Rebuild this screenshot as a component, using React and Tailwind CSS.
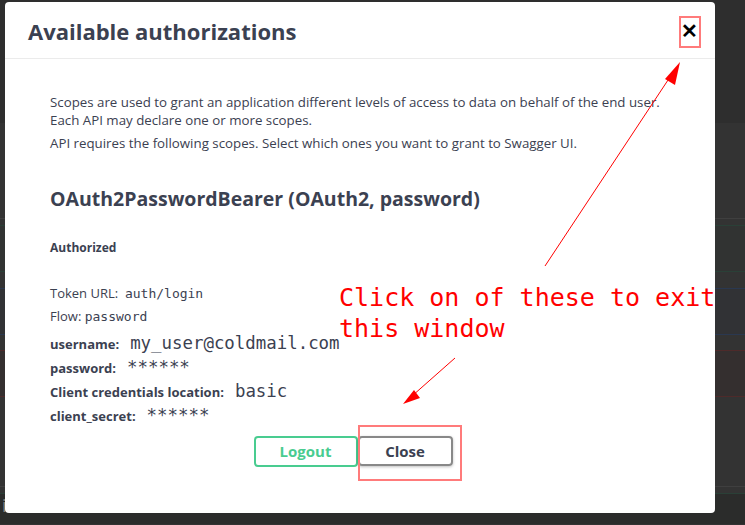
import React from "react";

const sans = { fontFamily: '"Open Sans", "Noto Sans", sans-serif' };

const Field = ({ label, value }) => (
  <div className="flex items-baseline h-[24px]">
    <span className="text-[13px] font-bold text-[#3b4151] mr-[11px]">{label}</span>
    <span className="font-['DejaVu_Sans_Mono',monospace] text-[17.4px] text-[#3b4151]">{value}</span>
  </div>
);

export default function App() {
  return (
    <div className="relative w-[745px] h-[525px] overflow-hidden bg-[#333333]" style={sans}>
      {/* page behind the overlay */}
      <div className="flex flex-col">
        <div className="h-[123px] bg-[#2e2e2e]" />
        <div className="h-[96px] border-b border-[#3f3f3f]" />
        <div className="h-[6px]" />
        <div className="h-[47px] bg-[#313332] border-y border-[#2a4037]" />
        <div className="h-[16px]" />
        <div className="h-[47px] bg-[#313235] border-y border-[#2a3850]" />
        <div className="h-[15px]" />
        <div className="h-[47px] bg-[#342f2f] border-y border-[#4e2a2a]" />
        <div className="h-[90px] border-b border-[#3f3f3f]" />
        <div className="h-[7px] border-b border-[#2a4037]" />
        <div className="h-[30px] bg-[#2b2c2b] text-[#888] text-[18px] leading-none pt-[2px] pl-[2px]">in</div>
      </div>

      {/* modal */}
      <div className="absolute left-[5px] top-[2px] w-[710px] h-[511px] bg-white rounded-[4px] flex flex-col">
        <div className="h-[57px] shrink-0 flex items-center justify-between pl-[23px] pr-[17px] border-b border-[#ebebeb]">
          <h3 className="text-[22px] font-bold text-[#3b4151] leading-none mt-[2px]">Available authorizations</h3>
          <span className="text-[20px] font-bold text-black leading-none mt-[1px]">✕</span>
        </div>

        <div className="flex flex-col pl-[45px] pt-[34px] text-[#3b4151]">
          <p className="text-[13.3px] leading-[18px]">
            Scopes are used to grant an application different levels of access to data on behalf of the end user.
            <br />
            Each API may declare one or more scopes.
          </p>
          <p className="text-[13.3px] leading-[18px] mt-[5px]">
            API requires the following scopes. Select which ones you want to grant to Swagger UI.
          </p>

          <h4 className="text-[19.5px] font-bold leading-[28px] mt-[33px]">OAuth2PasswordBearer (OAuth2, password)</h4>

          <h6 className="text-[12px] font-bold leading-[16px] mt-[27px]">Authorized</h6>

          <p className="text-[13px] leading-[18px] mt-[28px]">
            Token URL:&nbsp;&nbsp;<code className="font-['DejaVu_Sans_Mono',monospace] text-[13px]">auth/login</code>
          </p>
          <p className="text-[13px] leading-[18px] mt-[4px]">
            Flow: <code className="font-['DejaVu_Sans_Mono',monospace] text-[13px]">password</code>
          </p>

          <div className="flex flex-col mt-[4px]">
            <Field label="username:" value="my_user@coldmail.com" />
            <Field label="password:" value="******" />
            <Field label="Client credentials location:" value="basic" />
            <Field label="client_secret:" value="******" />
          </div>
        </div>

        <div className="flex justify-center pr-[14px] mt-[10px]">
          <button className="w-[104px] h-[31px] border-2 border-[#49cc90] rounded-[4px] text-[15px] font-bold text-[#49cc90]">
            Logout
          </button>
          <button className="w-[95px] h-[30px] border-2 border-[#888888] rounded-[4px] text-[15px] font-bold text-[#3b4151] shadow-[0_1px_3px_rgba(0,0,0,0.25)]">
            Close
          </button>
        </div>
      </div>

      {/* annotations */}
      <div className="absolute left-[679px] top-[16px] w-[22px] h-[32px] border-2 border-[#ff7b7b]" />
      <div className="absolute left-[358px] top-[425px] w-[104px] h-[56px] border-2 border-[#ff7b7b]" />
      <div className="absolute left-[339px] top-[282px] text-[25px] leading-[31px] text-[#ff0000] font-['DejaVu_Sans_Mono',monospace] whitespace-pre">
        {"Click on of these to exit\nthis window"}
      </div>
      <svg className="absolute left-0 top-0" width="745" height="525" viewBox="0 0 745 525">
        <line x1="545" y1="266" x2="672" y2="74" stroke="#ff0000" strokeWidth="1" />
        <polygon points="680,62 665,79 675,85" fill="#ff0000" />
        <line x1="455" y1="358" x2="412" y2="396" stroke="#ff0000" strokeWidth="1" />
        <polygon points="403,404 414,390 420,398" fill="#ff0000" />
      </svg>
    </div>
  );
}
